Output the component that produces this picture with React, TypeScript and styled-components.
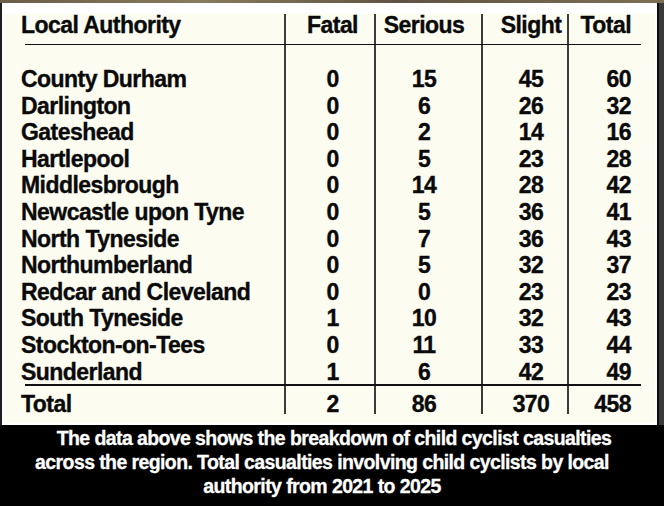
import React from "react";
import styled, { createGlobalStyle } from "styled-components";

const Global = createGlobalStyle`
  html, body { margin: 0; padding: 0; background: #000; }
  body { font-family: "Liberation Sans", Arial, sans-serif; }
`;

type Align = "left" | "center" | "right";
interface ColSpec { align: Align; pl: number; pr: number; line: boolean }

const COLS: ColSpec[] = [
  { align: "left", pl: 17, pr: 0, line: false },
  { align: "center", pl: 5, pr: 0, line: true },
  { align: "center", pl: 0, pr: 9, line: true },
  { align: "center", pl: 12, pr: 0, line: true },
  { align: "right", pl: 0, pr: 24, line: true },
];

const ROWS: [string, number, number, number, number][] = [
  ["County Durham", 0, 15, 45, 60],
  ["Darlington", 0, 6, 26, 32],
  ["Gateshead", 0, 2, 14, 16],
  ["Hartlepool", 0, 5, 23, 28],
  ["Middlesbrough", 0, 14, 28, 42],
  ["Newcastle upon Tyne", 0, 5, 36, 41],
  ["North Tyneside", 0, 7, 36, 43],
  ["Northumberland", 0, 5, 32, 37],
  ["Redcar and Cleveland", 0, 0, 23, 23],
  ["South Tyneside", 1, 10, 32, 43],
  ["Stockton-on-Tees", 0, 11, 33, 44],
  ["Sunderland", 1, 6, 42, 49],
];

const Frame = styled.div`
  width: 664px;
  height: 506px;
  display: flex;
  flex-direction: column;
  background: #3a3a3a;
  overflow: hidden;
`;

const TopStrip = styled.div`
  height: 3px;
  flex: none;
  background: linear-gradient(90deg, #6a5c47, #8a7a5e 30%, #5f5443 60%, #7d6e55);
`;

const PanelWrap = styled.div`
  flex: 1;
  display: flex;
  border-left: 2px solid #1e1e1e;
  border-right: 2px solid #0c0c0c;
  margin-right: 5px;
`;

const Paper = styled.div`
  flex: 1;
  background: #ffffff;
  padding: 11px 2px 2px 2px;
  display: flex;
`;

const Cream = styled.div`
  flex: 1;
  background: #fdfcf1;
  color: #0a0a0a;
  font-weight: 700;
  font-size: 23px;
  letter-spacing: -0.55px;
  -webkit-text-stroke: 0.35px #0a0a0a;
`;

const Row = styled.div<{ $h: number; $lh: number; $pt: number }>`
  position: relative;
  display: grid;
  grid-template-columns: 280px 90px 107px 86px 1fr;
  height: ${(p) => p.$h}px;
  line-height: ${(p) => p.$lh}px;
  white-space: nowrap;
  & > * { padding-top: ${(p) => p.$pt}px; }
`;

const HeaderRow = styled(Row)`
  &::after {
    content: "";
    position: absolute;
    left: 21px;
    right: 14px;
    bottom: 0;
    height: 1.5px;
    background: #111;
  }
`;

const TotalRow = styled(Row)`
  &::before {
    content: "";
    position: absolute;
    left: 21px;
    right: 14px;
    top: -1px;
    height: 1.5px;
    background: #111;
  }
`;

const Cell = styled.div<{ $col: number }>`
  box-sizing: border-box;
  text-align: ${(p) => COLS[p.$col].align};
  padding-left: ${(p) => COLS[p.$col].pl}px;
  padding-right: ${(p) => COLS[p.$col].pr}px;
  border-left: ${(p) => (COLS[p.$col].line ? "2px solid #3c3c3c" : "none")};
`;

const Caption = styled.div`
  height: 81px;
  flex: none;
  box-sizing: border-box;
  background: #000;
  color: #fff;
  padding-top: 1px;
  text-align: center;
  font-weight: 700;
  font-size: 19.5px;
  line-height: 24px;
  letter-spacing: -0.6px;
  -webkit-text-stroke: 0.3px #fff;
  white-space: nowrap;
`;

const CaptionLine = styled.div<{ $shift: number }>`
  transform: translateX(${(p) => p.$shift}px);
`;

function Cells({ values }: { values: (string | number)[] }) {
  return (
    <>
      {values.map((v, i) => (
        <Cell key={i} $col={i}>
          {v}
        </Cell>
      ))}
    </>
  );
}

export default function App() {
  return (
    <>
      <Global />
      <Frame>
        <TopStrip />
        <PanelWrap>
          <Paper>
            <Cream>
              <HeaderRow $h={31} $lh={22} $pt={0}>
                <Cells values={["Local Authority", "Fatal", "Serious", "Slight", "Total"]} />
              </HeaderRow>
              <Row $h={21} $lh={21} $pt={0}>
                <Cells values={["", "", "", "", ""]} />
              </Row>
              {ROWS.map((r) => (
                <Row key={r[0]} $h={26.6} $lh={26.6} $pt={0}>
                  <Cells values={r} />
                </Row>
              ))}
              <TotalRow $h={29} $lh={19} $pt={10}>
                <Cells values={["Total", 2, 86, 370, 458]} />
              </TotalRow>
            </Cream>
          </Paper>
        </PanelWrap>
        <Caption>
          <CaptionLine $shift={2}>The data above shows the breakdown of child cyclist casualties</CaptionLine>
          <CaptionLine $shift={-10}>across the region. Total casualties involving child cyclists by local</CaptionLine>
          <CaptionLine $shift={-10}>authority from 2021 to 2025</CaptionLine>
        </Caption>
      </Frame>
    </>
  );
}
